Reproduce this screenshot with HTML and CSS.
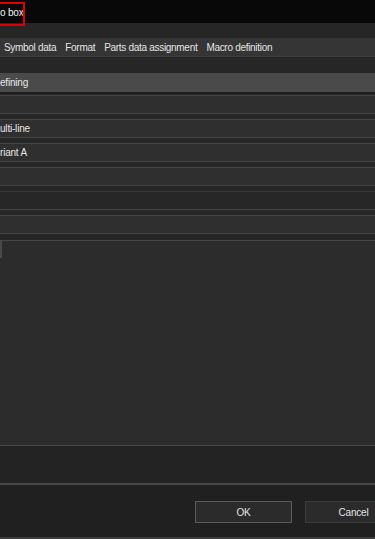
FILE: index.html
```html
<!DOCTYPE html>
<html lang="en">
<head>
    <meta charset="UTF-8">
    <meta name="viewport" content="width=device-width, initial-scale=1.0">
    <title>Properties dialog box</title>
    <link rel="stylesheet" href="styles.css">
</head>
<body>
    <div class="dialog">
        <div class="titlebar">
            <span class="title">o box</span>
            <div class="highlight"></div>
        </div>
        <div class="menuband"></div>

        <div class="tabs">
            <span class="tab">Symbol data</span>
            <span class="tab">Format</span>
            <span class="tab">Parts data assignment</span>
            <span class="tab">Macro definition</span>
        </div>

        <div class="panel">
            <div class="group-header">efining</div>

            <div class="fields">
                <div class="field"></div>
                <div class="field">ulti-line</div>
                <div class="field">riant A</div>
                <div class="field"></div>
                <div class="field field-dark"></div>
                <div class="field"></div>
            </div>

            <div class="textarea">
                <div class="caret"></div>
            </div>
            <div class="status-area"></div>
        </div>

        <div class="footer">
            <button class="btn btn-default">OK</button>
            <button class="btn">Cancel</button>
        </div>
    </div>
</body>
</html>
```

FILE: styles.css
```css
html, body {
    margin: 0;
    padding: 0;
}
body {
    width: 375px;
    height: 539px;
    overflow: hidden;
    background: #202020;
    font-family: "Segoe UI", "Liberation Sans", Arial, sans-serif;
    font-size: 10px;
    letter-spacing: -0.2px;
    color: #e2e2e2;
}
.dialog {
    width: 420px;
    height: 539px;
    display: flex;
    flex-direction: column;
}
.titlebar {
    position: relative;
    height: 23px;
    background: #080808;
    display: flex;
    align-items: center;
    padding-top: 1px;
    box-sizing: border-box;
}
.title {
    color: #f2f2f2;
    font-size: 10px;
}
.highlight {
    position: absolute;
    left: -30px;
    top: 2px;
    width: 51px;
    height: 20px;
    border: 2px solid #e10000;
    z-index: 2;
}
.menuband {
    height: 15px;
    background: #262626;
}
.tabs {
    height: 19px;
    background: #353535;
    display: flex;
    align-items: center;
    gap: 9px;
    padding-left: 4px;
    border-bottom: 1px solid #3d3d3d;
    box-sizing: border-box;
    letter-spacing: -0.3px;
}
.tab {
    color: #e4e4e4;
    white-space: nowrap;
}
.panel {
    background: #262626;
    padding-top: 16px;
}
.group-header {
    height: 19px;
    line-height: 19px;
    background: #4a4a4a;
    color: #e8e8e8;
    border-bottom: 2px solid #1e1e1e;
}
.fields {
    display: flex;
    flex-direction: column;
    gap: 5px;
    padding-top: 1px;
}
.field {
    height: 17px;
    line-height: 17px;
    background: #2f2f2f;
    border-top: 1px solid #454545;
    border-bottom: 1px solid #444;
    color: #e6e6e6;
}
.field-dark {
    background: #272727;
    border-top-color: #3a3a3a;
}
.textarea {
    margin-top: 6px;
    height: 204px;
    background: #2c2c2c;
    border-top: 1px solid #474747;
    border-bottom: 1px solid #4a4a4a;
}
.caret {
    width: 2px;
    height: 17px;
    background: #4a4a4a;
}
.status-area {
    height: 37px;
    background: #232323;
    border-bottom: 2px solid #474747;
}
.footer {
    flex: 1;
    display: flex;
    justify-content: flex-end;
    align-items: flex-start;
    gap: 13px;
    padding: 16px 18px 0 0;
    background: #202020;
    border-bottom: 2px solid #3c3c3c;
}
.btn {
    width: 97px;
    height: 22px;
    background: #2b2b2b;
    border: 1px solid #3c3c3c;
    color: #e4e4e4;
    font-family: inherit;
    font-size: 10px;
    letter-spacing: -0.2px;
    padding: 0;
}
.btn-default {
    border-color: #5c5c5c;
}
```
